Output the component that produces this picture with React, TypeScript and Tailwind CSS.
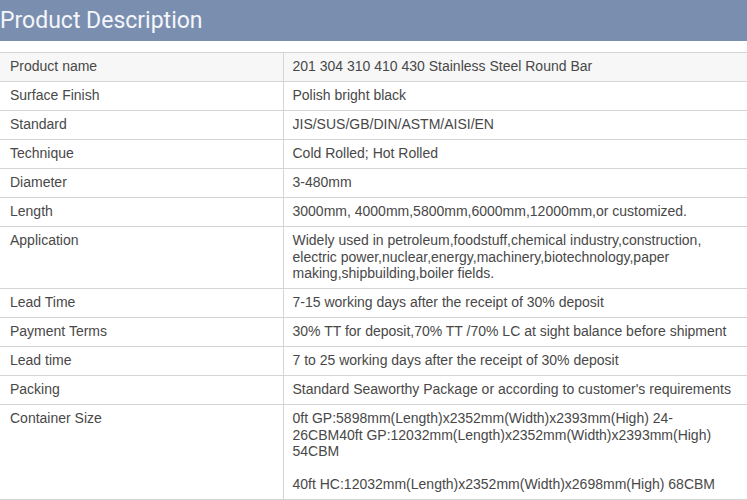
import React from "react"

const rows: { label: string; value: React.ReactNode; shaded?: boolean }[] = [
  { label: "Product name", value: "201 304 310 410 430 Stainless Steel Round Bar", shaded: true },
  { label: "Surface Finish", value: "Polish bright black" },
  { label: "Standard", value: "JIS/SUS/GB/DIN/ASTM/AISI/EN" },
  { label: "Technique", value: "Cold Rolled; Hot Rolled" },
  { label: "Diameter", value: "3-480mm" },
  { label: "Length", value: "3000mm, 4000mm,5800mm,6000mm,12000mm,or customized." },
  {
    label: "Application",
    value:
      "Widely used in petroleum,foodstuff,chemical industry,construction, electric power,nuclear,energy,machinery,biotechnology,paper making,shipbuilding,boiler fields.",
  },
  { label: "Lead Time", value: "7-15 working days after the receipt of 30% deposit" },
  { label: "Payment Terms", value: "30% TT for deposit,70% TT /70% LC at sight balance before shipment" },
  { label: "Lead time", value: "7 to 25 working days after the receipt of 30% deposit" },
  { label: "Packing", value: "Standard Seaworthy Package or according to customer's requirements" },
  {
    label: "Container Size",
    value: (
      <>
        0ft GP:5898mm(Length)x2352mm(Width)x2393mm(High) 24-26CBM40ft GP:12032mm(Length)x2352mm(Width)x2393mm(High) 54CBM
        <br />
        <br />
        40ft HC:12032mm(Length)x2352mm(Width)x2698mm(High) 68CBM
      </>
    ),
  },
]

export default function App() {
  return (
    <div className="w-[747px] h-[500px] overflow-hidden bg-white">
      {/* Title bar */}
      <div className="h-[41px] bg-[#7a8fb0] flex items-center">
        <h2 className="text-[23px] text-[#f4f6fa] font-['Roboto',sans-serif] leading-none pb-px">Product Description</h2>
      </div>

      {/* Spec table */}
      <table className="mt-[11px] w-[760px] border-collapse font-['Liberation_Sans',Arial,sans-serif] text-[14px] leading-[16.5px] text-[#484848]">
        <tbody>
          {rows.map((r) => (
            <tr key={r.label} className={r.shaded ? "bg-[#f7f7f7]" : "bg-white"}>
              <td className="w-[283px] align-top border-t border-b border-[#d4d4d4] pl-[10px] pr-2 pt-[5px] pb-[6.5px]">{r.label}</td>
              <td className="align-top border border-r-0 border-[#d4d4d4] pl-[9px] pr-[25px] pt-[5px] pb-[6.5px]">{r.value}</td>
            </tr>
          ))}
        </tbody>
      </table>
    </div>
  )
}
